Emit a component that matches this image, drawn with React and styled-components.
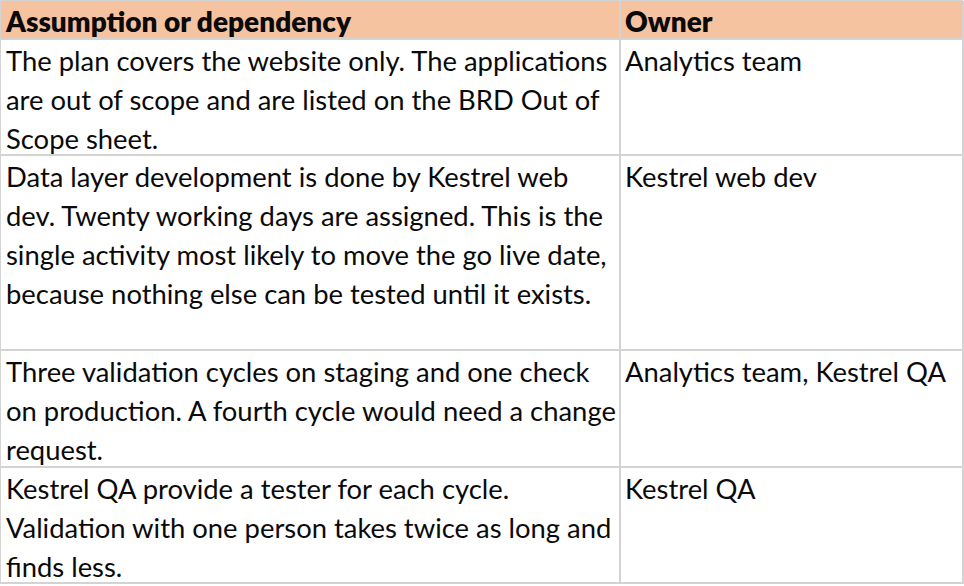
import React from "react";
import styled, { createGlobalStyle } from "styled-components";

const GlobalStyle = createGlobalStyle`
  html, body {
    margin: 0;
    padding: 0;
    background: #fff;
  }
  body {
    font-family: Lato, "Open Sans", "Liberation Sans", sans-serif;
    color: #0a0a0a;
  }
`;

const Sheet = styled.div`
  display: grid;
  grid-template-columns: 620px 343px;
  width: 963px;
  border-top: 1px solid #d3d3d3;
  border-left: 1px solid #d3d3d3;
  box-sizing: border-box;
`;

const Cell = styled.div`
  box-sizing: border-box;
  height: ${(p) => p.$height}px;
  padding: 1px 0 0 ${(p) => (p.$first ? 5 : 4)}px;
  border-right: 2px solid #d3d3d3;
  border-bottom: 2px solid #d3d3d3;
  background: ${(p) => (p.$head ? "#f6c3a0" : "#fff")};
  font-size: ${(p) => (p.$head ? 28 : 27.4)}px;
  font-weight: ${(p) => (p.$head ? 800 : 400)};
  line-height: 39px;
  overflow: hidden;
`;

const Line = styled.span`
  display: block;
  white-space: nowrap;
`;

const rows = [
  {
    height: 116,
    text: [
      "The plan covers the website only. The applications",
      "are out of scope and are listed on the BRD Out of",
      "Scope sheet.",
    ],
    owner: "Analytics team",
  },
  {
    height: 195,
    text: [
      "Data layer development is done by Kestrel web",
      "dev. Twenty working days are assigned. This is the",
      "single activity most likely to move the go live date,",
      "because nothing else can be tested until it exists.",
    ],
    owner: "Kestrel web dev",
  },
  {
    height: 117,
    text: [
      "Three validation cycles on staging and one check",
      "on production. A fourth cycle would need a change",
      "request.",
    ],
    owner: "Analytics team, Kestrel QA",
  },
  {
    height: 116,
    text: [
      "Kestrel QA provide a tester for each cycle.",
      "Validation with one person takes twice as long and",
      "finds less.",
    ],
    owner: "Kestrel QA",
  },
];

export default function App() {
  return (
    <>
      <GlobalStyle />
      <Sheet>
        <Cell $head $first $height={39}>
          <Line>Assumption or dependency</Line>
        </Cell>
        <Cell $head $height={39}>
          <Line>Owner</Line>
        </Cell>
        {rows.map((row) => (
          <React.Fragment key={row.owner}>
            <Cell $first $height={row.height}>
              {row.text.map((line) => (
                <Line key={line}>{line}</Line>
              ))}
            </Cell>
            <Cell $height={row.height}>
              <Line>{row.owner}</Line>
            </Cell>
          </React.Fragment>
        ))}
      </Sheet>
    </>
  );
}
